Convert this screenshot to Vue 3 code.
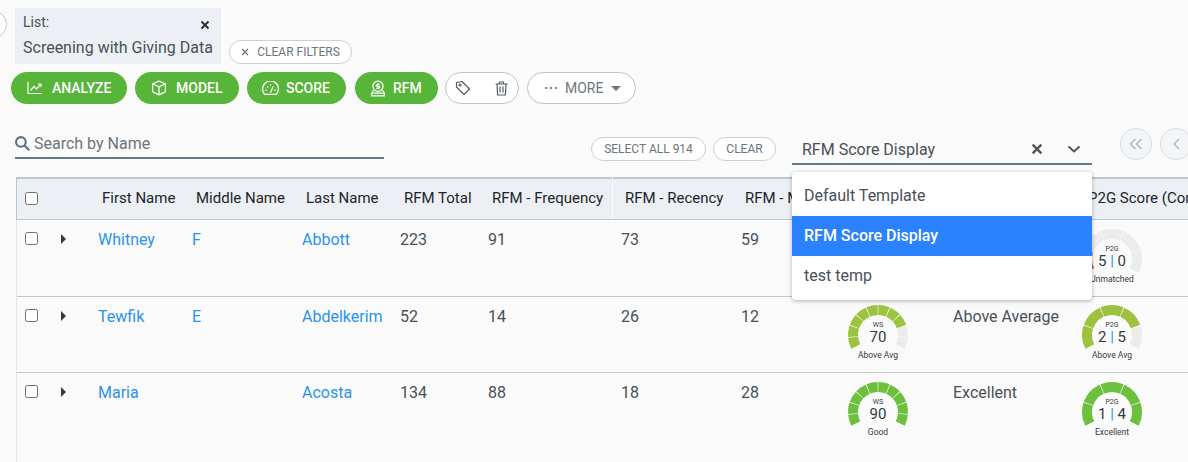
<script setup>
const polar = (cx, cy, r, deg) => {
  const a = ((deg - 90) * Math.PI) / 180
  return [(cx + r * Math.cos(a)).toFixed(2), (cy + r * Math.sin(a)).toFixed(2)]
}
const segment = (start, end) => {
  const [ax, ay] = polar(31, 31, 30, start)
  const [bx, by] = polar(31, 31, 30, end)
  const [cx, cy] = polar(31, 31, 20, end)
  const [dx, dy] = polar(31, 31, 20, start)
  return `M${ax} ${ay}A30 30 0 0 1 ${bx} ${by}L${cx} ${cy}A20 20 0 0 0 ${dx} ${dy}Z`
}
const segments = (count, colors) => {
  const from = -118
  const span = 236
  const gap = 1.5
  return Array.from({ length: count }, (_, i) => ({
    d: segment(from + (span * i) / count + gap / 2, from + (span * (i + 1)) / count - gap / 2),
    fill: colors[i] || '#ececec',
  }))
}
const repeat = (n, c) => Array(n).fill(c)
const olive = '#9cc23f'
const green = '#6dbf3e'

const columns = ['First Name', 'Middle Name', 'Last Name', 'RFM Total', 'RFM - Frequency', 'RFM - Recency', 'RFM - Monetary', 'WS Score', 'WS Rating', 'P2G Score (Combined)']

const rows = [
  {
    first: 'Whitney', middle: 'F', last: 'Abbott', total: 223, freq: 91, rec: 73, mon: 59, rating: 'Good',
    ws: { value: '80', label: 'Good', segs: segments(10, repeat(8, green)) },
    p2g: { a: 5, b: 0, label: 'Unmatched', segs: segments(5, ['#d9622b']) },
  },
  {
    first: 'Tewfik', middle: 'E', last: 'Abdelkerim', total: 52, freq: 14, rec: 26, mon: 12, rating: 'Above Average',
    ws: { value: '70', label: 'Above Avg', segs: segments(10, repeat(8, olive)) },
    p2g: { a: 2, b: 5, label: 'Above Avg', segs: segments(5, repeat(4, olive)) },
  },
  {
    first: 'Maria', middle: '', last: 'Acosta', total: 134, freq: 88, rec: 18, mon: 28, rating: 'Excellent',
    ws: { value: '90', label: 'Good', segs: segments(10, repeat(10, green)) },
    p2g: { a: 1, b: 4, label: 'Excellent', segs: segments(5, repeat(5, green)) },
  },
]
const options = ['Default Template', 'RFM Score Display', 'test temp']
</script>

<template>
  <div class="page">
    <div class="filters">
      <span class="back-circle"></span>
      <div class="chip">
        <div class="chip-top">
          <span>List:</span>
          <svg class="chip-x" width="10" height="10" viewBox="0 0 10 10"><path d="M1.5 1.5l7 7M8.500 1.500l-7 7" stroke="#222b33" stroke-width="1.800" fill="none" /></svg>
        </div>
        <div class="chip-value">Screening with Giving Data</div>
      </div>
      <button class="pill clear-filters">
        <svg width="8" height="8" viewBox="0 0 8 8"><path d="M1 1l6 6M7 1l-6 6" stroke="#6c757d" stroke-width="1.300" fill="none" /></svg>
        CLEAR FILTERS
      </button>
    </div>

    <div class="actions">
      <button class="act analyze">
        <svg width="16" height="14" viewBox="0 0 16 14" fill="none" stroke="#fff" stroke-width="1.200"><path d="M1 1v11.500h14" /><path d="M3.500 9.500l3.500-4 2.500 2.500 4-4.500" /><path d="M11 3h3v3" /></svg>
        ANALYZE
      </button>
      <button class="act model">
        <svg width="16" height="16" viewBox="0 0 15 15" fill="none" stroke="#fff" stroke-width="1.200" stroke-linejoin="round"><path d="M7.500 1l6 2.500v7.500l-6 3-6-3V3.500z" /><path d="M1.500 3.500l6 3 6-3M7.500 6.500V14" /></svg>
        MODEL
      </button>
      <button class="act score">
        <svg width="17" height="15" viewBox="0 0 16 14" fill="none" stroke="#fff" stroke-width="1.200"><path d="M2.500 12.500a7.500 7.500 0 1 1 11 0z" /><path d="M8 11l2.500-6" /><path d="M3 8.500h1.500M11.500 8.500H13M4.800 5l1 1M8 3v1.500" /></svg>
        SCORE
      </button>
      <button class="act rfm">
        <svg width="16" height="17" viewBox="0 0 14 15" fill="none" stroke="#fff" stroke-width="1.100"><circle cx="7" cy="5.500" r="4.500" /><path d="M8.500 3.800H6.300a.9.9 0 0 0 0 1.800h1.400a.9.900 0 0 1 0 1.800H5.500M7 3v5" /><path d="M3 9l-1.500 2.500v2.500h11v-2.500L11 9M1.500 11.500h11" /></svg>
        RFM
      </button>
      <div class="icon-group">
        <svg width="16" height="16" viewBox="0 0 16 16" fill="none" stroke="#565e64" stroke-width="1.200" stroke-linejoin="round"><path d="M1.500 2.500l5.500-1 7.500 7.500-5.500 5.500L1.500 7z" /><circle cx="5" cy="5" r="1" /></svg>
        <svg width="13" height="15" viewBox="0 0 13 15" fill="none" stroke="#565e64" stroke-width="1.200"><path d="M.500 3h12M4.500 3V1h4v2M2 3l.6 11h7.800L11 3M5 5.500v6M8 5.500v6" /></svg>
      </div>
      <button class="more">
        <span class="dots"><i></i><i></i><i></i></span>
        <span>MORE</span>
        <span class="caret"></span>
      </button>
    </div>

    <div class="search-row">
      <label class="search">
        <svg width="15" height="15" viewBox="0 0 14 14" fill="none" stroke="#5b7283" stroke-width="2"><circle cx="5.500" cy="5.500" r="4.500" /><path d="M8.800 8.800l4.500 4.500" /></svg>
        <span>Search by Name</span>
      </label>
      <button class="pill select-all">SELECT ALL 914</button>
      <button class="pill clear">CLEAR</button>
      <div class="select">
        <span class="select-value">RFM Score Display</span>
        <svg class="select-x" width="12" height="12" viewBox="0 0 11 11"><path d="M1.500 1.500l8 8M9.500 1.500l-8 8" stroke="#555" stroke-width="2.200" fill="none" /></svg>
        <svg class="select-chev" width="14" height="8" viewBox="0 0 14 8"><path d="M1.500 1.500L7 6.500l5.500-5" stroke="#555" stroke-width="2" fill="none" /></svg>
        <ul class="menu">
          <li v-for="(o, i) in options" :key="o" :class="{ active: i === 1 }">{{ o }}</li>
        </ul>
      </div>
      <div class="pager">
        <button class="round">
          <svg width="14" height="12" viewBox="0 0 14 12" fill="none" stroke="#a4b4c0" stroke-width="1.300"><path d="M6.500 1l-5 5 5 5M12.500 1l-5 5 5 5" /></svg>
        </button>
        <button class="round">
          <svg width="8" height="12" viewBox="0 0 8 12" fill="none" stroke="#a4b4c0" stroke-width="1.300"><path d="M7 1L2 6l5 5" /></svg>
        </button>
      </div>
    </div>

    <div class="table">
      <div class="thead">
        <div class="cell-check"><span class="check"></span></div>
        <div class="cell-arrow"></div>
        <div v-for="c in columns" :key="c" class="th" :class="{ divided: c === 'RFM - Recency' }">{{ c }}</div>
      </div>
      <div v-for="r in rows" :key="r.first" class="tr">
        <div class="cell-check"><span class="check"></span></div>
        <div class="cell-arrow"><span class="arrow"></span></div>
        <div class="td link">{{ r.first }}</div>
        <div class="td link">{{ r.middle }}</div>
        <div class="td link">{{ r.last }}</div>
        <div class="td">{{ r.total }}</div>
        <div class="td">{{ r.freq }}</div>
        <div class="td">{{ r.rec }}</div>
        <div class="td">{{ r.mon }}</div>
        <div class="td gauge-cell">
          <div class="gauge ws">
            <svg width="62" height="62" viewBox="0 0 62 62"><path v-for="(s, i) in r.ws.segs" :key="i" :d="s.d" :fill="s.fill" /></svg>
            <span class="g-tag">WS</span>
            <span class="g-val">{{ r.ws.value }}</span>
            <span class="g-label">{{ r.ws.label }}</span>
          </div>
        </div>
        <div class="td">{{ r.rating }}</div>
        <div class="td gauge-cell">
          <div class="gauge p2g">
            <svg width="62" height="62" viewBox="0 0 62 62"><path v-for="(s, i) in r.p2g.segs" :key="i" :d="s.d" :fill="s.fill" /></svg>
            <span class="g-tag">P2G</span>
            <span class="g-val">{{ r.p2g.a }} <i>|</i> {{ r.p2g.b }}</span>
            <span class="g-label">{{ r.p2g.label }}</span>
          </div>
        </div>
      </div>
    </div>
  </div>
</template>

<style>
html, body { margin: 0; background: #fafafa; }
</style>

<style scoped>
.page {
  width: 1188px;
  height: 462px;
  overflow: hidden;
  background: #fafafa;
  font-family: Roboto, "Liberation Sans", sans-serif;
  color: #343a40;
  font-size: 16px;
}
button { font-family: inherit; cursor: pointer; }

.filters {
  display: flex;
  align-items: flex-end;
  height: 56px;
  padding-top: 8px;
  padding-left: 15px;
  gap: 8px;
  position: relative;
}
.back-circle {
  position: absolute;
  left: -22px;
  top: 10px;
  width: 27px;
  height: 27px;
  border: 1px solid #c9c9c9;
  border-radius: 50%;
  background: #fff;
}
.chip {
  width: 206px;
  height: 56px;
  box-sizing: border-box;
  padding: 6px 8px;
  background: #ecf0f4;
  color: #495057;
}
.chip-top {
  display: flex;
  justify-content: space-between;
  align-items: center;
  font-size: 14px;
  line-height: 17px;
}
.chip-x { margin-right: 3px; margin-top: 5px; }
.chip-value { font-size: 16px; line-height: 19px; margin-top: 7px; white-space: nowrap; }

.pill {
  height: 24px;
  box-sizing: border-box;
  padding: 0;
  border: 1px solid #cfcfcf;
  border-radius: 12px;
  background: #fff;
  color: #6c757d;
  font-size: 12px;
  display: inline-flex;
  align-items: center;
  justify-content: center;
  flex: none;
}
.clear-filters { width: 123px; gap: 8px; }

.actions {
  display: flex;
  align-items: center;
  gap: 8px;
  padding-left: 11px;
  margin-top: 8px;
  height: 32px;
}
.act {
  height: 32px;
  border: 0;
  border-radius: 16px;
  background: #57b539;
  color: #fff;
  font-size: 14px;
  font-weight: 500;
  display: inline-flex;
  align-items: center;
  padding: 0 0 0 16px;
  gap: 9px;
}
.analyze { width: 116px; }
.model { width: 104px; }
.score { width: 99px; margin-right: 1px; padding-left: 15px; gap: 7px; }
.rfm { width: 83px; padding-left: 15px; gap: 7px; margin-right: -1px; }
.icon-group {
  width: 74px;
  height: 32px;
  box-sizing: border-box;
  border: 1px solid #c4c4c4;
  border-radius: 16px;
  background: #fff;
  display: flex;
  align-items: center;
  justify-content: space-between;
  padding: 0 10px 0 9px;
}
.more {
  width: 109px;
  height: 32px;
  box-sizing: border-box;
  border: 1px solid #c4c4c4;
  border-radius: 16px;
  background: #fff;
  color: #6c757d;
  font-size: 14px;
  display: inline-flex;
  align-items: center;
  padding: 0 0 0 17px;
  gap: 8px;
}
.dots { display: inline-flex; gap: 3px; }
.dots i { width: 2px; height: 2px; border-radius: 50%; background: #565e64; }
.caret {
  width: 0;
  height: 0;
  border-left: 5.500px solid transparent;
  border-right: 5.500px solid transparent;
  border-top: 5px solid #6c757d;
}

.search-row {
  display: flex;
  align-items: flex-start;
  height: 73px;
  padding-left: 15px;
  position: relative;
}
.search {
  width: 369px;
  flex: none;
  height: 31px;
  margin-top: 24px;
  padding-top: 2px;
  box-sizing: border-box;
  border-bottom: 2px solid #607d8b;
  display: flex;
  align-items: center;
  gap: 4px;
  color: #6c757d;
}
.select-all { width: 115px; margin: 33px 0 0 207px; }
.clear { width: 63px; margin: 33px 0 0 7px; }
.select {
  width: 300px;
  flex: none;
  height: 30px;
  margin: 31px 0 0 16px;
  box-sizing: border-box;
  border-bottom: 2px solid #607d8b;
  display: flex;
  align-items: center;
  position: relative;
  padding-left: 10px;
  color: #495057;
}
.select-value { flex: 1; }
.select-x { margin-right: 24px; }
.select-chev { margin-right: 11px; }
.menu {
  position: absolute;
  z-index: 5;
  left: 0;
  top: 37px;
  width: 300px;
  margin: 0;
  padding: 0;
  list-style: none;
  background: #fff;
  border-radius: 4px;
  box-shadow: 0 1px 4px rgba(0, 0, 0, .3);
  padding: 4px 0;
}
.menu li { height: 40px; line-height: 40px; padding-left: 12px; color: #495057; }
.menu li.active { background: #2a82ff; color: #fff; font-weight: 500; }
.pager { display: flex; gap: 8px; margin: 24px 0 0 28px; flex: none; }
.round {
  width: 32px;
  height: 32px;
  padding: 0;
  border: 1px solid #d7dde2;
  border-radius: 50%;
  background: #f3f5f7;
  display: flex;
  align-items: center;
  justify-content: center;
  flex: none;
}

.table {
  width: 1300px;
  margin-left: 16px;
  border-left: 1px solid #e4e4e4;
}
.thead, .tr {
  display: grid;
  grid-template-columns: 38px 39px 94px 110px 98px 88px 133px 120px 112px 100px 131px 160px;
}
.thead {
  height: 43px;
  box-sizing: border-box;
  background: #ecf0f4;
  border-top: 2px solid #b9c7ce;
  border-bottom: 1px solid #b9c7ce;
  margin-left: -1px;
  border-left: 1px solid #b9c7ce;
  align-items: center;
  font-size: 15px;
  color: #212529;
  padding-bottom: 2px;
}
.th { padding-left: 8px; white-space: nowrap; overflow: hidden; }
.th.divided { overflow: visible; position: relative; }
.th.divided::before {
  content: "";
  position: absolute;
  left: -5px;
  top: -12px;
  height: 42px;
  width: 1px;
  background: #fafafa;
}
.tr {
  height: 76.500px;
  box-sizing: border-box;
  border-bottom: 1px solid #b9c7ce;
  font-size: 16px;
  color: #495057;
}
.tr:last-child { border-bottom: 0; height: 90px; }
.cell-check { display: flex; padding-left: 8px; align-items: center; }
.tr .cell-check { align-items: flex-start; padding-top: 12px; }
.check {
  width: 11px;
  height: 11px;
  border: 1px solid #6f6f6f;
  border-radius: 2.500px;
  background: #fff;
}
.cell-arrow { padding: 14px 0 0 6px; }
.arrow {
  display: block;
  width: 0;
  height: 0;
  border-top: 5px solid transparent;
  border-bottom: 5px solid transparent;
  border-left: 5px solid #343a40;
}
.td { padding: 10px 0 0 4px; line-height: 19px; white-space: nowrap; }
.link { color: #2a93ee; }
.gauge-cell { padding: 0; display: flex; justify-content: flex-start; }
.gauge {
  position: relative;
  width: 62px;
  height: 68px;
  margin-top: 7.500px;
  text-align: center;
}
.gauge.ws { margin-left: -2px; }
.gauge.p2g { margin-left: 1px; }
.gauge svg { display: block; }
.g-tag { position: absolute; left: 0; right: 0; top: 17px; font-size: 7px; line-height: 8px; color: #343a40; }
.g-val { position: absolute; left: 0; right: 0; top: 25px; font-size: 15px; line-height: 16px; color: #343a40; white-space: nowrap; }
.g-val i { font-style: normal; color: #2a93ee; }
.g-label { position: absolute; left: -10px; right: -10px; top: 46px; font-size: 8.500px; line-height: 10px; color: #343a40; }
</style>
